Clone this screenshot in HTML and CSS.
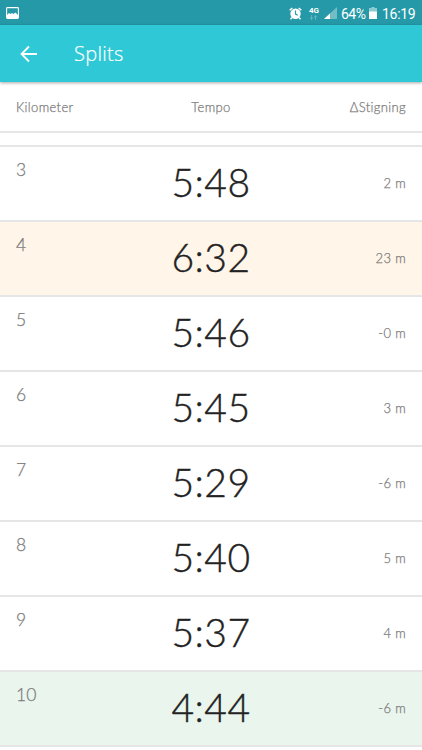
FILE: index.html
```html
<!DOCTYPE html>
<html lang="da">
<head>
<meta charset="utf-8">
<title>Splits</title>
<link rel="stylesheet" href="styles.css">
</head>
<body>
<div class="status">
  <svg class="picture" width="13" height="12" viewBox="0 0 13 12"><rect x=".6" y=".6" width="11.8" height="10.8" rx=".8" fill="none" stroke="#fff" stroke-width="1.1"/><path d="M1 11V8l2-2 1.500 1L6 6l1.500 1 2-1.500L12 8v3z" fill="#fff"/></svg>
  <div class="indicators">
    <svg class="alarm" width="13" height="13" viewBox="0 0 13 13"><path d="M.7 3.300 3.300 1M12.300 3.300 9.700 1M3 10.500 1.500 12.200M10 10.500l1.500 1.700" stroke="#fff" stroke-width="1.500"/><circle cx="6.500" cy="6.800" r="5.200" fill="#fff"/><path d="M6.500 3.500v3.600l2.300 1.200" fill="none" stroke="#2599a8" stroke-width="1.100"/></svg>
    <div class="network"><span>4G</span><svg width="9" height="5" viewBox="0 0 9 5"><path d="M2.500 0v4M1 2.500l1.500 2L4 2.500M6.500 5V1M5 2.500l1.500-2L8 2.500" fill="none" stroke="#6dbbc5" stroke-width=".8"/></svg></div>
    <svg class="signal" width="13" height="12" viewBox="0 0 13 12"><path d="M0 12 13 0v12z" fill="#72bdc6"/><path d="M0 12 6 6.500V12z" fill="#fff"/></svg>
    <span class="percent">64%</span>
    <svg class="battery" width="8" height="12" viewBox="0 0 8 12"><path d="M2.500 0h3v1H8v4H0V1h2.500z" fill="#8ccad1"/><path d="M0 4.500h8V12H0z" fill="#fff"/></svg>
    <span class="clock">16:19</span>
  </div>
</div>
<header class="appbar">
  <svg width="18" height="18" viewBox="0 0 18 18"><path d="M17 9H2M9 1.500 1.600 9 9 16.500" fill="none" stroke="#fff" stroke-width="1.900"/></svg>
  <h1>Splits</h1>
</header>
<div class="grid head"><span>Kilometer</span><span class="mid">Tempo</span><span class="end">ΔStigning</span></div>
<div class="sliver"></div>
<main>
  <div class="grid row"><span class="km">3</span><span class="pace">5:48</span><span class="end">2 m</span></div>
  <div class="grid row slow"><span class="km">4</span><span class="pace">6:32</span><span class="end">23 m</span></div>
  <div class="grid row"><span class="km">5</span><span class="pace">5:46</span><span class="end">-0 m</span></div>
  <div class="grid row"><span class="km">6</span><span class="pace">5:45</span><span class="end">3 m</span></div>
  <div class="grid row"><span class="km">7</span><span class="pace">5:29</span><span class="end">-6 m</span></div>
  <div class="grid row"><span class="km">8</span><span class="pace">5:40</span><span class="end">5 m</span></div>
  <div class="grid row"><span class="km">9</span><span class="pace">5:37</span><span class="end">4 m</span></div>
  <div class="grid row fast"><span class="km">10</span><span class="pace">4:44</span><span class="end">-6 m</span></div>
</main>
</body>
</html>
```
FILE: styles.css
```css
* { box-sizing: border-box; }
body { margin: 0; height: 750px; overflow: hidden; background: #fff; color: #7c7c7c; font-family: Lato, sans-serif; }
svg { display: block; flex: none; }
.status { height: 25px; padding: 1px 7px 0 6px; background: #2599a8; color: #fff; display: flex; align-items: center; justify-content: space-between; }
.indicators { display: flex; align-items: center; font: 14px/24px Roboto, sans-serif; }
.alarm { margin: 0 0 0 1px; }
.network { width: 11px; margin: 0 4px 0 7px; font: bold 8px/7px Roboto, sans-serif; }
.network svg { margin-top: 1px; }
.percent { margin: 2px 3px 0 4px; width: 25px; letter-spacing: -.5px; }
.clock { margin: 2px 0 0 5px; width: 33px; letter-spacing: -.3px; }
.appbar { position: relative; height: 57px; padding: 0 20px; background: #2ec8d6; color: #fff; display: flex; align-items: center; box-shadow: 0 1px 3px rgba(0,0,0,.35); }
.appbar h1 { margin: 0 0 0 36px; font: 300 20px/28px "Open Sans", sans-serif; letter-spacing: .3px; -webkit-text-stroke: .2px #fff; }
.grid { display: grid; grid-template-columns: 1fr 1fr 1fr; padding: 0 16px; font-size: 13px; font-weight: 300; letter-spacing: .35px; -webkit-text-stroke: .25px currentColor; border-bottom: 2px solid #e6e6e6; }
.head { height: 51px; align-items: center; }
.mid { text-align: center; }
.end { text-align: right; }
.sliver { height: 14px; border-bottom: 2px solid #e6e6e6; }
.row { height: 75px; align-items: center; }
.row .end { margin-top: -2px; }
.km { align-self: start; padding-top: 12px; font-size: 17.5px; line-height: 22px; letter-spacing: 0; }
.pace { margin-top: -4px; color: #222; font-size: 39px; line-height: 46px; text-align: center; letter-spacing: .5px; -webkit-text-stroke: .4px #222; }
.slow { background: #fff5e8; }
.fast { background: #eaf5ee; }
```
